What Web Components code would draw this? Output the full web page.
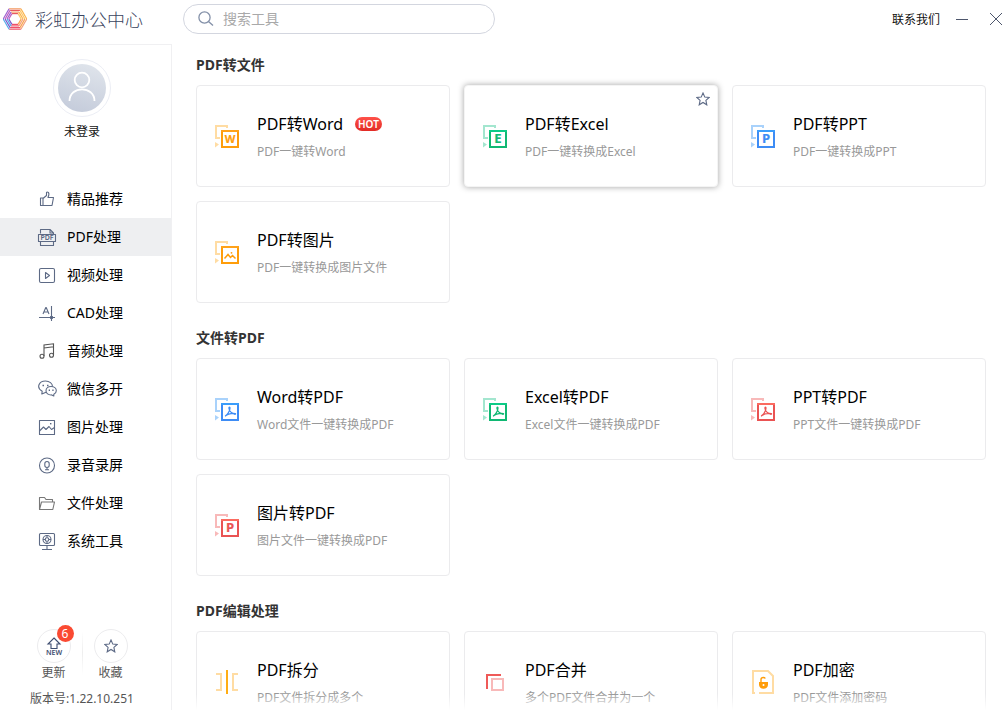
<!DOCTYPE html>
<html lang="zh-CN">
<head>
<meta charset="utf-8">
<title>彩虹办公中心</title>
<style>
html,body{margin:0;height:100%}
body{font-family:"Noto Sans","Noto Sans CJK SC",sans-serif;font-size:12px;color:#222;background:#fff;overflow:hidden}
</style>
</head>
<body>
<office-app></office-app>
<script>
const pair = (light, from, to, inner) => `<svg viewBox="0 0 24 24" width="24" height="24" fill="none">
<path d="M12 4V2H1V14H5" stroke="${light}" stroke-width="2"/><path d="M0 18L4 20.5L0 23.5Z" fill="${light}"/>
<rect x="7" y="7" width="16" height="16" fill="#fff" stroke="${to}" stroke-width="2"/><path d="M6 7H24" stroke="${from}" stroke-width="2"/>${inner}</svg>`;
const letter = (c, fill) => `<text x="15" y="19" text-anchor="middle" font-family="Open Sans,Noto Sans,sans-serif" font-weight="700" font-size="${c === 'W' ? 11 : 13}" fill="${fill}" stroke="${fill}" stroke-width=".2">${c}</text>`;
const acro = c => `<path d="M10 19.3C12.5 18 15 13.5 15 11.2C15 9.6 13.8 9.8 13.9 11.2C14.2 14 17 17 20 17.3C21 17.3 20.8 16.3 19.5 16.3C16.5 16.2 12 17.3 10.3 19" stroke="${c}" stroke-width="1.2"/>`;
const line = (w, h, body) => `<svg viewBox="0 0 ${w} ${h}" width="${w}" height="${h}" fill="none" stroke="#5d6a85" stroke-width="1.1" stroke-linejoin="round">${body}</svg>`;
const O = ['#ffdca3', '#ffa21a', '#ff9d0a'], G = ['#a3e6cf', '#0ccb86', '#10b873'], B = ['#a9d2fb', '#3a9dfb', '#3d8cf5'], R = ['#f8b9b9', '#fb6b60', '#ea5353'];

const hex = (() => {
  const outer = ['#f4a06a', '#fbb24a', '#f3a17c', '#ef5f72', '#52a9e8', '#9a5fd0'];
  const inner = ['#ea5a60', '#fcc76a', '#f9a24b', '#f0516a', '#7a55cc', '#c05fc0'];
  let s = '';
  for (let i = 0; i < 6; i++) {
    const a = (-120 + i * 60) * Math.PI / 180, b = a + Math.PI / 3;
    [[11.8, outer], [9.9, inner], [8, outer], [6.2, inner]].forEach(([r, set]) => {
      const x = t => (12 + r * Math.cos(t)).toFixed(1), y = t => (12 + r * Math.sin(t)).toFixed(1);
      s += `<path d="M${x(a)} ${y(a)}L${x(b)} ${y(b)}" stroke="${set[i]}" stroke-width="1.2"/>`;
    });
  }
  return `<svg viewBox="0 0 24 24" width="24" height="24" fill="none">${s}</svg>`;
})();

const ICONS = {
  logo: hex,
  search: `<svg viewBox="0 0 16 16" width="16" height="16" fill="none" stroke="#8390a8" stroke-width="1.3"><circle cx="6.5" cy="6.5" r="5.6"/><path d="M10.5 10.5L15 14.5"/></svg>`,
  min: `<svg viewBox="0 0 12 12" width="12" height="12"><path d="M0 6.5H12" stroke="#4d566c"/></svg>`,
  close: `<svg viewBox="0 0 12 12" width="12" height="12"><path d="M0 0L12 12M12 0L0 12" stroke="#4d566c"/></svg>`,
  user: `<svg viewBox="0 0 48 48" width="48" height="48" fill="none"><defs><linearGradient id="u" x1="0.7" y1="0" x2="0.4" y2="1"><stop stop-color="#dfe4eb"/><stop offset="1" stop-color="#c5ccdb"/></linearGradient></defs><circle cx="24" cy="24" r="24" fill="url(#u)"/><g stroke="#fff" stroke-width="1.8"><circle cx="24" cy="16" r="7.3"/><path d="M11.5 37C11.5 21.5 36.5 21.5 36.5 37"/></g></svg>`,
  star: `<svg viewBox="0 0 14 14" width="14" height="14" fill="none" stroke="#5d6a86" stroke-width="1.1"><path d="M7 1L8.8 5.1L13.2 5.5L9.9 8.4L10.8 12.8L7 10.5L3.2 12.8L4.1 8.4L.8 5.5L5.2 5.1Z"/></svg>`,
  update: `<svg viewBox="0 0 18 20" width="18" height="20" fill="none" stroke="#3d4d70" stroke-width="1.1"><path d="M9 2L15 8H12V12.5H6V8H3Z"/><text x="9" y="19" text-anchor="middle" font-family="Noto Sans,sans-serif" font-weight="600" font-size="7" fill="#3d4d70" stroke="none">NEW</text></svg>`,
  thumb: line(20, 20, `<path d="M3.5 9H6V16.5H3.5ZM6 9.5L9.5 6.5V3.5Q10 2.5 11.5 3.5Q12.5 5 11 8.5H16.5L15 16.5H6"/>`),
  pdf: line(20, 20, `<path d="M3.5 6.5V2.5H13L16.5 6V7M13 2.5V6H16.5M3.5 14.5V18.5H16.5V14.5M1.5 7.5H18.5V14.5H1.5Z"/><text x="10" y="13.4" text-anchor="middle" font-family="Noto Sans,sans-serif" font-weight="600" font-size="7" fill="#56647f" stroke="none">PDF</text>`),
  video: line(20, 20, `<rect x="2.5" y="3.5" width="15" height="14" rx="1.5"/><path d="M8.5 7.5L12.5 10.5L8.5 13.5Z"/>`),
  cad: line(20, 20, `<path d="M2 14.5H18M14.5 3V18M6 11L8.8 4.5H9.2L12 11M7 9H11"/><circle cx="14.5" cy="14.5" r="1.2" fill="#56647f"/>`),
  music: `<svg viewBox="0 0 20 20" width="20" height="20" fill="none" stroke="#555" stroke-width="1.1"><path d="M7 15V4L16.5 2.8V14M7 7L16.5 5.8"/><circle cx="5" cy="15.2" r="2"/><circle cx="14.5" cy="14.2" r="2"/></svg>`,
  wechat: line(20, 20, `<path d="M9 13.2L4.8 15L5.2 12.3C-1.2 8.5 2 2 8.5 2C12.5 2 15.5 4.5 15.5 7.5"/><path d="M14 7.5C17 7.5 19.3 9.3 19.3 11.8C19.3 13.5 18 14.7 16.8 15.3V17L14.7 15.9C11.3 16.2 9 14.3 9 11.8C9 9.3 11.2 7.5 14 7.5Z"/><path d="M5.5 6.5H7M10 6.5H11.5M11.7 11.3H13M15.3 11.3H16.6" stroke-width="1.5"/>`),
  image: line(20, 20, `<rect x="2.5" y="3.5" width="15" height="14"/><path d="M2.5 14L6.5 10L9 12.5L12 9.5L14.5 12.5L17.5 10.5"/><rect x="13" y="6" width="1.4" height="1.4" fill="#56647f" stroke="none"/>`),
  record: line(20, 20, `<circle cx="10" cy="10.5" r="7.5"/><rect x="7.8" y="6.5" width="4.4" height="6" rx="2.2"/><path d="M10 12.5V14.5M8 14.7H12"/>`),
  folder: line(20, 20, `<g stroke="#777"><path d="M2.5 16.5V4.5H7.5L9 6.5H15.5V8.7M2.5 16.5L4.5 9H17.5L15.8 16.5Z"/></g>`),
  system: line(20, 20, `<rect x="2.5" y="2.5" width="15" height="12" rx="1"/><circle cx="10" cy="8.5" r="4"/><circle cx="10" cy="8.5" r="1.8"/><path d="M10 4.5V6.7M10 10.3V12.5M6 8.5H8.2M11.8 8.5H14M10 14.5V18M5 18.5H15"/>`),
  word: pair(...O, letter('W', '#ff9d0a')), excel: pair(...G, letter('E', '#10b873')), ppt: pair(...B, letter('P', '#3d8cf5')),
  pic: pair(...O, `<path d="M9.5 18.5L13 14.5L15.5 17.5L17.5 15.5L20.5 18.5" stroke="#ff9d0a" stroke-width="1.5"/><circle cx="16.5" cy="12.8" r=".9" fill="#ff9d0a"/>`),
  acroblue: pair(...B, acro('#3d8cf5')), acrogreen: pair(...G, acro('#10b873')), acrored: pair(...R, acro('#ea5353')),
  picpdf: pair(...R, letter('P', '#ea5353')),
  split: `<svg viewBox="0 0 24 24" width="24" height="24" fill="none" stroke-width="2"><path d="M1 4H6V20H1M23 4H18V20H23" stroke="#ffdca3"/><path d="M12 0V24" stroke="#ffad14"/></svg>`,
  merge: `<svg viewBox="0 0 24 24" width="24" height="24" fill="none" stroke-width="2"><path d="M4 19V5H18" stroke="#ef5a58"/><rect x="9" y="9" width="11" height="11" stroke="#f8b9b9"/></svg>`,
  lock: `<svg viewBox="0 0 24 24" width="24" height="24" fill="none" stroke-width="2"><path d="M4 23H2V1H17L22 6V23H8" stroke="#ffdca3"/><path d="M10 12V9.5Q10 7.5 12.3 7.5Q13.8 7.5 14.3 8.5" stroke="#ff9d0a" stroke-width="1.4"/><path d="M8 12H17V15Q16.5 18.5 12.5 18.8Q8.5 18.5 8 15Z" fill="#ff9d0a"/><circle cx="12.5" cy="15" r="1" fill="#fff"/></svg>`
};

const define = (name, css, html, setup) => {
  const template = document.createElement('template');
  template.innerHTML = `<style>*{box-sizing:border-box}a{color:inherit;text-decoration:none}button{margin:0;padding:0;border:0;background:none;font:inherit;color:inherit;cursor:pointer}${css}</style>${html}`;
  customElements.define(name, class extends HTMLElement {
    constructor() {
      super();
      this.attachShadow({ mode: 'open' }).append(template.content.cloneNode(true));
    }
    connectedCallback() { if (setup) setup(this, this.shadowRoot); }
  });
};
const placeIcon = (host, root) => { root.querySelector('ui-icon').outerHTML = `<ui-icon name="${host.getAttribute('icon')}"></ui-icon>`; };

define('ui-icon', `:host{display:inline-flex;flex:none}svg{display:block}span{display:flex}`, `<span aria-hidden="true"></span>`,
  (host, root) => { root.querySelector('span').innerHTML = ICONS[host.getAttribute('name')] || ''; });

define('search-box', `
:host{display:block;width:312px}
label{display:flex;align-items:center;gap:9px;height:30px;padding:0 14px;border:1px solid #d3d6df;border-radius:15px}
input{flex:1;min-width:0;border:0;outline:0;padding:0 0 2px;background:none;font:inherit;font-size:14px;color:#333}
input::placeholder{color:#a9a9a9;opacity:1}`,
  `<label><ui-icon name="search"></ui-icon><input type="text" placeholder="搜索工具" aria-label="搜索工具"></label>`);

define('app-header', `
:host{display:flex;align-items:center;height:38px;padding:0 6px 0 11px}
nav{display:flex;align-items:center;margin-left:auto}
.min{margin-left:16px}.close{margin-left:22px}button{display:flex}
a{color:#111}`,
  `<search-box></search-box><nav><a href="#contact">联系我们</a><button class="min" aria-label="最小化"><ui-icon name="min"></ui-icon></button><button class="close" aria-label="关闭"><ui-icon name="close"></ui-icon></button></nav>`);

define('nav-item', `
:host{display:block}
a{display:flex;align-items:center;gap:10px;height:38px;padding-left:37px;font-size:14px;color:#000}
.label{padding-bottom:2px}
:host([active]) a{background:#eeeff1}`,
  `<a href="#"><ui-icon></ui-icon><span class="label"><slot></slot></span></a>`, placeIcon);

define('user-panel', `
:host{display:flex;flex-direction:column;align-items:center;padding:14px 7px 0 0}
.ring{display:flex;padding:4px;border:1px solid #eceef5;border-radius:50%}
a{margin-top:5px;line-height:20px;color:#111}`,
  `<div class="ring"><ui-icon name="user"></ui-icon></div><a href="#login">未登录</a>`);

define('round-action', `
:host{display:block}
button{display:flex;flex-direction:column;align-items:center;gap:1px;line-height:18px;color:#555}
.disc{position:relative;display:grid;place-items:center;width:34px;height:34px;border:1px solid #ececee;border-radius:50%}
.badge{position:absolute;top:-5px;right:-4px;min-width:17px;height:17px;border-radius:9px;background:#fa4a32;color:#fff;font-size:12px;line-height:17px;text-align:center}
.badge:empty{display:none}`,
  `<button><span class="disc"><ui-icon></ui-icon><span class="badge"></span></span><slot></slot></button>`,
  (host, root) => {
    placeIcon(host, root);
    root.querySelector('.badge').textContent = host.getAttribute('count') || '';
  });

define('side-bar', `
:host{display:flex;flex-direction:column;height:100%;border-right:1px solid #f0f0f2}
.brand{display:flex;align-items:center;gap:8px;height:38px;padding-left:3px;margin:0;font-size:18px;font-weight:300;color:#3a4560}
.brand-row{flex:none;height:45px;border-bottom:1px solid #f0f0f2;margin-right:-1px;background:#fff}
nav{margin-top:38px}
footer{margin-top:auto;padding-right:7px;color:#555;text-align:center}
.actions{display:flex;justify-content:center;gap:11px;margin-bottom:8px}
.rule{width:1px;height:44px;margin-top:2px;background:linear-gradient(#fff,#eee,#fff)}
p{margin:0 0 2px;line-height:18px}`,
  `<div class="brand-row"><h1 class="brand"><ui-icon name="logo"></ui-icon>彩虹办公中心</h1></div>
<user-panel></user-panel>
<nav aria-label="工具分类">
<nav-item icon="thumb">精品推荐</nav-item><nav-item icon="pdf" active>PDF处理</nav-item><nav-item icon="video">视频处理</nav-item><nav-item icon="cad">CAD处理</nav-item><nav-item icon="music">音频处理</nav-item><nav-item icon="wechat">微信多开</nav-item><nav-item icon="image">图片处理</nav-item><nav-item icon="record">录音录屏</nav-item><nav-item icon="folder">文件处理</nav-item><nav-item icon="system">系统工具</nav-item>
</nav>
<footer><div class="actions"><round-action icon="update" count="6">更新</round-action><span class="rule"></span><round-action icon="star">收藏</round-action></div><p>版本号:1.22.10.251</p></footer>`);

define('tool-card', `
:host{display:block;position:relative;min-width:0;height:102px;border:1px solid #ebebed;border-radius:4px;background:#fff}
:host([active]){border-color:#f4f4f4;box-shadow:0 0 6px rgba(0,0,0,.36)}
.link{display:flex;align-items:center;gap:18px;height:100%;padding:0 18px}
.text{display:flex;flex-direction:column;gap:7px;min-width:0;padding-top:1px;white-space:nowrap}
h3{display:flex;align-items:center;gap:12px;margin:0;font-size:16px;font-weight:400;line-height:24px;color:#000}
p{margin:0;line-height:18px;color:#999}
.hot{padding:0 3px;border-radius:7px;background:linear-gradient(#ff5149,#e22b25);color:#fff;font-size:10px;font-weight:600;line-height:14px}
.star{display:none;position:absolute;top:6px;right:7px}
:host([active]) .star{display:flex}`,
  `<a class="link" href="#"><ui-icon></ui-icon><span class="text"><h3><slot></slot><span class="hot">HOT</span></h3><p><slot name="desc"></slot></p></span></a><button class="star" aria-label="收藏"><ui-icon name="star"></ui-icon></button>`,
  (host, root) => {
    placeIcon(host, root);
    if (!host.hasAttribute('hot')) root.querySelector('.hot').remove();
  });

define('tool-section', `
:host{display:block;margin-bottom:15px}
h2{margin:0;font-size:14px;line-height:40px;font-weight:700;color:#333}
.grid{display:grid;grid-template-columns:repeat(auto-fill,minmax(240px,1fr));gap:14px}`,
  `<h2><slot name="title"></slot></h2><div class="grid"><slot></slot></div>`);

define('office-app', `
:host{display:grid;grid-template-columns:172px 1fr;height:100vh;background:#fff}
.pane{display:flex;flex-direction:column;position:relative;min-width:0;min-height:0}
app-header{flex:none;margin-bottom:7px}
main{flex:1;min-height:0;overflow-y:auto;scrollbar-width:none;padding:0 22px 0 24px}
.fade{position:absolute;left:0;right:0;bottom:0;height:16px;background:linear-gradient(rgba(255,255,255,0),#fff);pointer-events:none}`,
  `<side-bar></side-bar>
<div class="pane"><app-header></app-header>
<main>
<tool-section><span slot="title">PDF转文件</span>
<tool-card icon="word" hot>PDF转Word<span slot="desc">PDF一键转Word</span></tool-card>
<tool-card icon="excel" active>PDF转Excel<span slot="desc">PDF一键转换成Excel</span></tool-card>
<tool-card icon="ppt">PDF转PPT<span slot="desc">PDF一键转换成PPT</span></tool-card>
<tool-card icon="pic">PDF转图片<span slot="desc">PDF一键转换成图片文件</span></tool-card>
</tool-section>
<tool-section><span slot="title">文件转PDF</span>
<tool-card icon="acroblue">Word转PDF<span slot="desc">Word文件一键转换成PDF</span></tool-card>
<tool-card icon="acrogreen">Excel转PDF<span slot="desc">Excel文件一键转换成PDF</span></tool-card>
<tool-card icon="acrored">PPT转PDF<span slot="desc">PPT文件一键转换成PDF</span></tool-card>
<tool-card icon="picpdf">图片转PDF<span slot="desc">图片文件一键转换成PDF</span></tool-card>
</tool-section>
<tool-section><span slot="title">PDF编辑处理</span>
<tool-card icon="split">PDF拆分<span slot="desc">PDF文件拆分成多个</span></tool-card>
<tool-card icon="merge">PDF合并<span slot="desc">多个PDF文件合并为一个</span></tool-card>
<tool-card icon="lock">PDF加密<span slot="desc">PDF文件添加密码</span></tool-card>
</tool-section>
</main><div class="fade"></div></div>`);
</script>
</body>
</html>
